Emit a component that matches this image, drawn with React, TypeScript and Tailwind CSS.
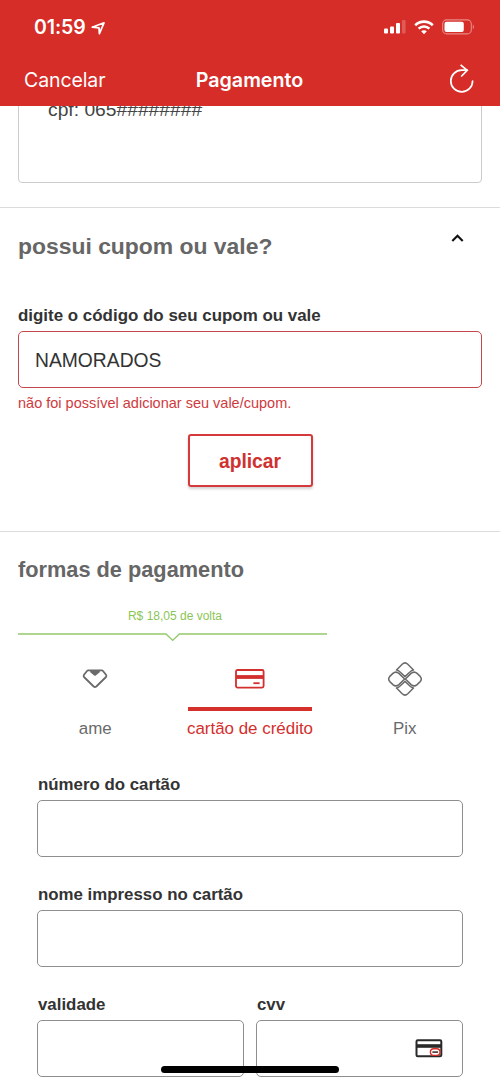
import React, { useState } from 'react';

type PaymentMethod = 'ame' | 'card' | 'pix';

interface FieldProps {
    label: string;
    children?: React.ReactNode;
}

const LocationIcon = () => (
    <svg width="15" height="15" viewBox="0 0 15 15" fill="none" stroke="currentColor" strokeWidth={1.7} strokeLinejoin="round">
        <path d="M1.2 6.2L13 1.8L8.4 12.6L8 6.9Z" />
    </svg>
);

const SignalIcon = () => (
    <svg width="22" height="14" viewBox="0 0 22 14" fill="currentColor">
        <rect x="0" y="8.5" width="4" height="5" rx="1" />
        <rect x="6" y="6.5" width="4" height="7" rx="1" />
        <rect x="12" y="3" width="4" height="10.5" rx="1" />
        <rect x="18" y="0" width="3.6" height="13.5" rx="1" opacity="0.22" />
    </svg>
);

const WifiIcon = () => (
    <svg width="20" height="15" viewBox="0 0 20 15" fill="none" stroke="currentColor">
        <path d="M1.2 5.2C6.2 0.4 13.8 0.4 18.8 5.2" strokeWidth={2.6} />
        <path d="M4.6 8.7C7.7 5.8 12.3 5.8 15.4 8.7" strokeWidth={2.5} />
        <path d="M10 14.3L7.2 11.3C8.8 9.9 11.2 9.9 12.8 11.3Z" fill="currentColor" stroke="none" />
    </svg>
);

const BatteryIcon = () => (
    <svg width="33" height="16" viewBox="0 0 33 16" fill="none">
        <rect x="0.7" y="0.9" width="28.6" height="14" rx="4" stroke="currentColor" strokeWidth={1.1} opacity="0.45" />
        <rect x="2.5" y="2.7" width="19.3" height="10.4" rx="2" fill="currentColor" />
        <path d="M30.8 5.6C32.4 6.4 32.4 9.4 30.8 10.2Z" fill="currentColor" opacity="0.45" />
    </svg>
);

const ReloadIcon = () => (
    <svg width="26" height="30" viewBox="0 0 26 30" fill="none" stroke="currentColor" strokeWidth={1.7}>
        <path d="M23.6 17A10.9 10.9 0 1 1 12.7 6.1H18" strokeLinecap="round" />
        <path d="M11.6 0.9L18.2 6.4L12.2 12.5" />
    </svg>
);

const AmeIcon = () => (
    <svg width="26" height="20" viewBox="0 0 26 20" fill="none" stroke="currentColor" strokeWidth={1.8} strokeLinejoin="round">
        <path d="M6.3 1.4H19.7Q20.5 1.4 21 2L24 5.8Q24.8 7 24 8L14.3 17.5Q13 18.6 11.7 17.5L2 8Q1.2 7 2 5.8L5 2Q5.5 1.4 6.3 1.4Z" />
        <path d="M7.6 1H18.4L17.4 3.5L13.8 6.5Q13 7.1 12.2 6.5L8.6 3.5Z" fill="currentColor" stroke="none" />
    </svg>
);

const CreditCardIcon = () => (
    <svg width="30" height="20" viewBox="0 0 30 20" fill="none">
        <rect x="1" y="1" width="27.6" height="17.6" rx="1.5" stroke="currentColor" strokeWidth={1.8} />
        <path d="M1 8H28.6" stroke="currentColor" strokeWidth={3.8} />
        <path d="M18.4 14.2H24.6" stroke="currentColor" strokeWidth={1.8} />
    </svg>
);

const PixIcon = () => (
    <svg width="34" height="34" viewBox="0 0 34 34" fill="none" stroke="currentColor" strokeWidth={1.5} strokeLinejoin="round">
        <path d="M8.5 8L14.2 2.2Q17 -0.5 19.8 2.2L25.5 8C24.2 8.3 23.2 8.8 22.2 9.8L17 14.6L11.8 9.8C10.8 8.8 9.8 8.3 8.5 8Z" />
        <path d="M8.5 26L14.2 31.8Q17 34.5 19.8 31.8L25.5 26C24.2 25.7 23.2 25.2 22.2 24.2L17 19.4L11.8 24.2C10.8 25.2 9.8 25.7 8.5 26Z" />
        <path d="M16.6 17L10.9 22.6Q7.8 25.2 4.9 22.6L1.8 19.6Q-0.4 17 1.8 14.4L4.9 11.4Q7.8 8.8 10.9 11.4Z" />
        <path d="M17.4 17L23.1 22.6Q26.2 25.2 29.1 22.6L32.2 19.6Q34.4 17 32.2 14.4L29.1 11.4Q26.2 8.8 23.1 11.4Z" />
    </svg>
);

const CvvIcon = () => (
    <svg width="28" height="19" viewBox="0 0 28 19" fill="none">
        <rect x="1.5" y="1.2" width="24.8" height="16" rx="1.2" stroke="#292929" strokeWidth={2} />
        <path d="M1.5 7H26" stroke="#292929" strokeWidth={3.6} />
        <rect x="15.4" y="9.8" width="9.6" height="6.6" rx="3.3" fill="#fff" stroke="#d62d28" strokeWidth={1.4} />
        <path d="M17.4 13.1H23" stroke="#4a3030" strokeWidth={1.6} />
    </svg>
);

const Field: React.FC<FieldProps> = ({ label, children }) => (
    <label className="flex min-w-0 flex-1 flex-col gap-[5px]">
        <span className="pl-px text-[16.85px] leading-5 font-bold text-[#333]">{label}</span>
        <span className="flex h-[57px] items-center justify-end rounded-[5px] border border-[#8e8e8e] bg-white pr-[19px]">
            {children}
        </span>
    </label>
);

const METHODS: { id: PaymentMethod; label: string; icon: React.ReactNode }[] = [
    { id: 'ame', label: 'ame', icon: <AmeIcon /> },
    { id: 'card', label: 'cartão de crédito', icon: <CreditCardIcon /> },
    { id: 'pix', label: 'Pix', icon: <PixIcon /> },
];

const Header = () => (
    <header className="relative z-10 h-[106px] bg-[#d62d28] font-['Inter',sans-serif] text-white">
        <div className="flex h-[54px] items-center justify-between pr-[25px] pl-[34px]">
            <div className="flex items-center gap-1 pt-[2px]">
                <span className="w-[53px] text-[19.5px] font-semibold tracking-[-0.1px]">01:59</span>
                <LocationIcon />
            </div>
            <div className="flex items-center gap-2">
                <SignalIcon />
                <WifiIcon />
                <BatteryIcon />
            </div>
        </div>
        <div className="grid h-[52px] grid-cols-3 items-center pr-[25px] pl-[24px]">
            <button className="pt-[2px] text-left text-[19.5px] tracking-[-0.1px]">Cancelar</button>
            <h1 className="pt-[2px] text-center text-[19.7px] font-semibold">Pagamento</h1>
            <button className="-mt-[2px] justify-self-end" aria-label="Recarregar">
                <ReloadIcon />
            </button>
        </div>
    </header>
);

const CouponSection = () => {
    const [code, setCode] = useState('NAMORADOS');

    return (
        <section className="h-[324px] border-t border-[#dcdcdc] px-[18px] pt-6">
            <div className="flex h-7 justify-between pr-[18px]">
                <h2 className="text-[22.9px] leading-7 font-bold text-[#666]">possui cupom ou vale?</h2>
                <svg className="mt-px" width="13" height="10" viewBox="0 0 13 10" fill="none" stroke="#111" strokeWidth={2.1}>
                    <path d="M1.3 8L6.5 2.8L11.7 8" />
                </svg>
            </div>
            <label htmlFor="coupon" className="mt-[46px] block text-[16.93px] leading-5 font-bold text-[#333]">
                digite o código do seu cupom ou vale
            </label>
            <input
                id="coupon"
                value={code}
                onChange={e => setCode(e.target.value)}
                className="mt-[5px] block h-[57px] w-full rounded-[5px] border border-[#c6474b] px-4 pt-[2px] text-[19.3px] text-[#333] outline-none"
            />
            <p className="mt-[5px] text-[14.5px] leading-5 text-[#cf3a3e]">não foi possível adicionar seu vale/cupom.</p>
            <button className="mx-auto mt-[21px] block h-[53px] w-[125px] rounded-[3px] border-2 border-[#d5393b] pt-[3px] text-[19.3px] font-bold text-[#d0312f] shadow-[0_2px_3px_rgba(0,0,0,0.18)]">
                aplicar
            </button>
        </section>
    );
};

const PaymentSection = () => {
    const [method, setMethod] = useState<PaymentMethod>('card');

    return (
        <section className="border-t border-[#dcdcdc] px-[18px] pt-6">
            <h2 className="text-[21.75px] leading-7 font-bold text-[#666]">formas de pagamento</h2>

            <div className="mt-[24px] w-[314px] text-center text-[12px] leading-4 text-[#8ac557]">R$ 18,05 de volta</div>
            <svg className="mt-[8px] block" width="309" height="10" viewBox="0 0 309 10" fill="none" stroke="#94c96a" strokeWidth={1.4}>
                <path d="M0 2H148L154.7 8.4L161.4 2H309" />
            </svg>

            <div className="mt-[19px] grid grid-cols-3">
                {METHODS.map(m => (
                    <button
                        key={m.id}
                        onClick={() => setMethod(m.id)}
                        className={m.id === method ? 'flex flex-col items-center text-[#d32f2e]' : 'flex flex-col items-center text-[#6a6a6a]'}
                    >
                        <span className="flex h-[36px] items-center">{m.icon}</span>
                        <span className={m.id === method ? 'mt-[10px] h-1 w-[124px] bg-[#d5302c]' : 'mt-[10px] h-1 w-[124px]'} />
                        <span className="mt-[8px] text-[16.93px] leading-5 whitespace-nowrap">{m.label}</span>
                    </button>
                ))}
            </div>

            <div className="mt-[36px] flex flex-col gap-7 px-[19px]">
                <Field label="número do cartão" />
                <Field label="nome impresso no cartão" />
                <div className="flex gap-3">
                    <Field label="validade" />
                    <Field label="cvv">
                        <CvvIcon />
                    </Field>
                </div>
            </div>
        </section>
    );
};

export default function App() {
    return (
        <div className="relative h-[1082px] w-[500px] overflow-hidden bg-white font-['Liberation_Sans',Arial,sans-serif]">
            <Header />
            <main>
                <div className="mx-[18px] -mt-5 mb-6 h-[97px] rounded-[4px] border border-[#ccc] px-[29px] pt-[11px] text-[19.25px] leading-6 text-[#444]">
                    cpf: 065########
                </div>
                <CouponSection />
                <PaymentSection />
            </main>
            <div className="absolute bottom-[9px] left-[161px] h-[7px] w-[178px] rounded-full bg-black" />
        </div>
    );
}
